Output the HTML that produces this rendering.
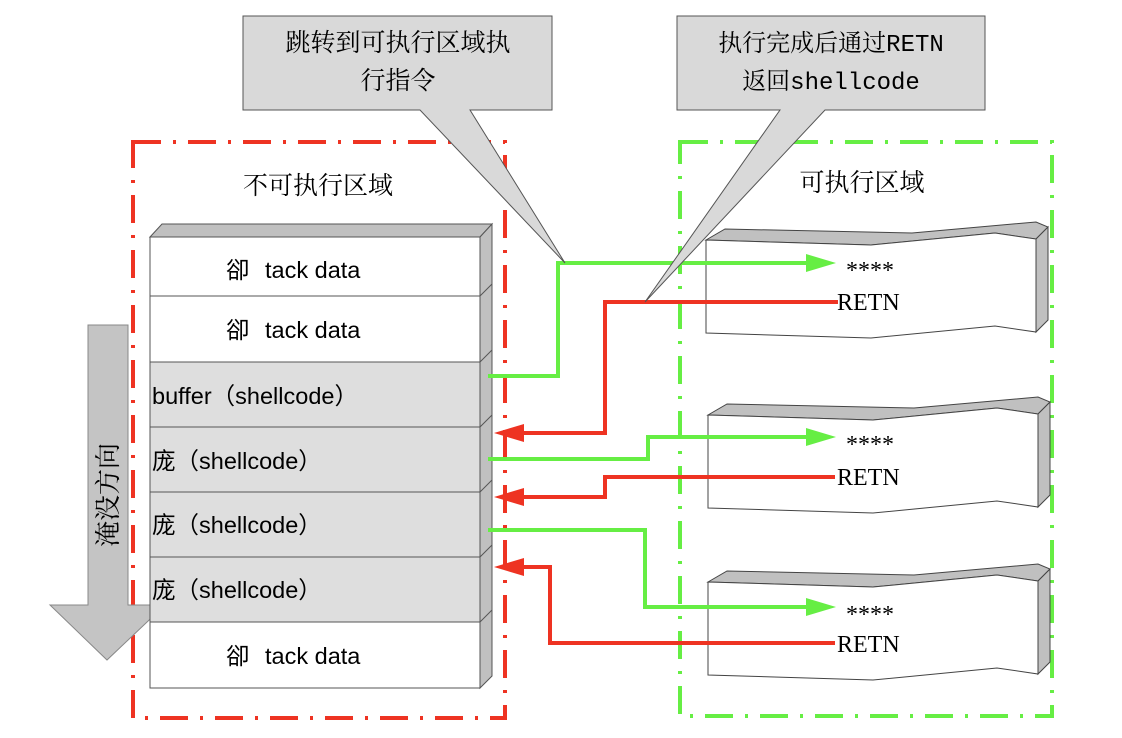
<!DOCTYPE html>
<html><head><meta charset="utf-8"><style>
body{margin:0;background:#fff}
svg{display:block}
text{font-family:"Liberation Sans","Noto Sans CJK SC",sans-serif}
text.s,.s text{font-family:"Liberation Serif","Noto Serif CJK SC",serif}
text.m,.m text{font-family:"Liberation Mono","Noto Serif CJK SC",monospace}
</style></head><body>
<svg width="1122" height="738" viewBox="0 0 1122 738" xmlns="http://www.w3.org/2000/svg">
<rect x="133" y="142" width="372" height="576" fill="none" stroke="#ee3322" stroke-width="4" stroke-dasharray="28,12,3,12"/>
<rect x="680" y="142" width="372" height="574" fill="none" stroke="#66ee44" stroke-width="4" stroke-dasharray="28,12,3,12"/>
<text x="318" y="194" font-size="25" text-anchor="middle" class="s">不可执行区域</text>
<text x="862" y="191" font-size="25" text-anchor="middle" class="s">可执行区域</text>

<polygon points="88,325 128,325 128,605 165,605 107,660 50,605 88,605" fill="#c4c4c4" stroke="#888"/>
<text x="108" y="495" font-size="26" text-anchor="middle" class="s" transform="rotate(-90 108 495) translate(0,9)">淹没方向</text>

<polygon points="150,237 162,224 492,224 480,237" fill="#c0c0c0" stroke="#555"/>
<polygon points="480,237 492,224 492,676 480,688" fill="#c0c0c0" stroke="#555"/>
<rect x="150" y="362" width="330" height="260" fill="#dedede"/>
<rect x="150" y="237" width="330" height="451" fill="none" stroke="#555"/>
<g stroke="#555"><line x1="150" y1="296" x2="480" y2="296"/><line x1="150" y1="362" x2="480" y2="362"/><line x1="150" y1="427" x2="480" y2="427"/><line x1="150" y1="492" x2="480" y2="492"/><line x1="150" y1="557" x2="480" y2="557"/><line x1="150" y1="622" x2="480" y2="622"/>
<line x1="480" y1="296" x2="492" y2="284"/><line x1="480" y1="362" x2="492" y2="350"/><line x1="480" y1="427" x2="492" y2="415"/><line x1="480" y1="492" x2="492" y2="480"/><line x1="480" y1="557" x2="492" y2="545"/><line x1="480" y1="622" x2="492" y2="610"/></g>
<g font-size="23.5">
<text x="226" y="278">卻<tspan x="265">tack data</tspan></text>
<text x="226" y="338">卻<tspan x="265">tack data</tspan></text>
<text x="152" y="404">buffer（shellcode）</text>
<text x="152" y="469">庞（shellcode）</text>
<text x="152" y="533">庞（shellcode）</text>
<text x="152" y="598">庞（shellcode）</text>
<text x="226" y="664">卻<tspan x="265">tack data</tspan></text>
</g>

<g id="b">
<polygon points="706,240 725,229 912,233 1036,222 1048,227 1036,239 995,233 871,245" fill="#c0c0c0" stroke="#444"/>
<polygon points="1036,239 1048,227 1048,320 1036,332" fill="#c0c0c0" stroke="#444"/>
<polygon points="706,240 871,245 995,233 1036,239 1036,332 995,326 871,338 706,333" fill="#fff" stroke="#444"/>
</g>
<use href="#b" transform="translate(2,175)"/>
<use href="#b" transform="translate(2,342)"/>

<g fill="none" stroke-width="4">
<polyline points="488,376 558,376 558,263 810,263" stroke="#66ee44"/>
<polyline points="838,302 605,302 605,433 520,433" stroke="#ee3322"/>
<polyline points="488,459 648,459 648,437 810,437" stroke="#66ee44"/>
<polyline points="835,477 605,477 605,497 520,497" stroke="#ee3322"/>
<polyline points="488,530 645,530 645,607 810,607" stroke="#66ee44"/>
<polyline points="835,643 550,643 550,567 520,567" stroke="#ee3322"/>
</g>
<g fill="#66ee44"><polygon points="806,254 836,263 806,272"/><polygon points="806,428 836,437 806,446"/><polygon points="806,598 836,607 806,616"/></g>
<g fill="#ee3322"><polygon points="524,424 494,433 524,442"/><polygon points="524,488 494,497 524,506"/><polygon points="524,558 494,567 524,576"/></g>
<g font-size="24" class="s">
<text x="846" y="278">****</text><text x="837" y="310">RETN</text>
<text x="846" y="452">****</text><text x="837" y="485">RETN</text>
<text x="846" y="622">****</text><text x="837" y="652">RETN</text>
</g>

<polygon points="243,16 552,16 552,110 470,110 565,263 420,110 243,110" fill="#d9d9d9" stroke="#555"/>
<text x="398" y="51" font-size="25" text-anchor="middle" class="s">跳转到可执行区域执</text>
<text x="398" y="89" font-size="25" text-anchor="middle" class="s">行指令</text>
<polygon points="677,16 985,16 985,110 825,110 645,302 780,110 677,110" fill="#d9d9d9" stroke="#555"/>
<text x="831" y="51" font-size="24" text-anchor="middle" class="m">执行完成后通过RETN</text>
<text x="831" y="89" font-size="24" text-anchor="middle" class="m">返回shellcode</text>
</svg>
</body></html>
